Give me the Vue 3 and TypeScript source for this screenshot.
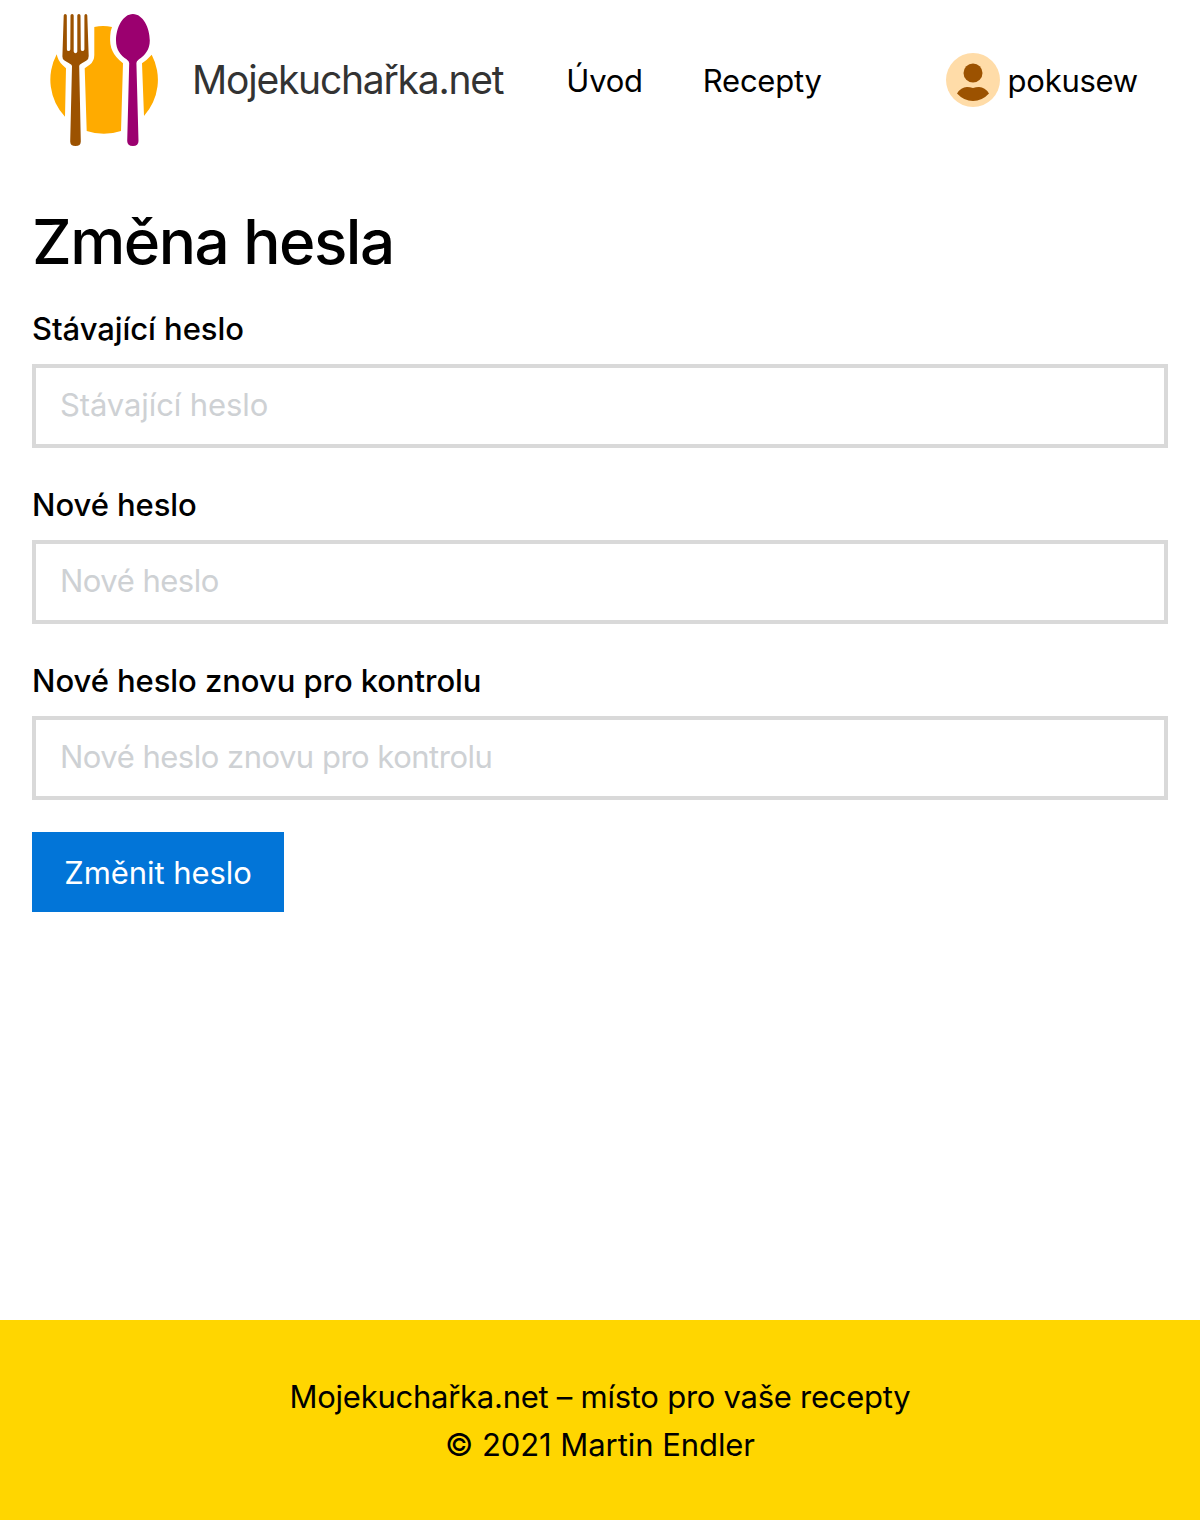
<script setup lang="ts">
interface Field { id: string; label: string }

const links: string[] = ['Úvod', 'Recepty']
const fields: Field[] = [
  { id: 'current', label: 'Stávající heslo' },
  { id: 'next', label: 'Nové heslo' },
  { id: 'repeat', label: 'Nové heslo znovu pro kontrolu' },
]
</script>

<template>
  <div class="page">
    <header class="header">
      <svg class="logo" viewBox="0 0 112 136" aria-hidden="true">
        <g fill="#ffab00">
          <path d="M8.700 42.300Q10 49 14.500 53L18 56.300L17 104.700A54 54 0 0 1 8.700 42.300Z" />
          <path d="M46.300 14.900Q55 13.200 64 14.900Q62.200 19 62.200 24Q61.500 33 64.500 39Q67 45 75 51.300L73 119A54 54 0 0 1 38.700 119L36.700 56.300L42 52.500Q46.300 49 46.300 43Z" />
          <path d="M103.700 42.700A54 54 0 0 1 96 104L94 51.300Q99 48 103.700 42.700Z" />
        </g>
        <path d="M15.700 3.500Q15.700 2 17.200 2T18.800 3.500L18.900 37.500Q19 39 20.500 39T22.300 37.500L22.500 3.500Q22.500 2 24.100 2T25.700 3.500V39.500Q26 41.300 27.500 41.300T29.300 39.500V3.500Q29.300 2 30.900 2T32.500 3.500L32.800 37.500Q33 39 34.500 39T36.400 37.500V3.500Q36.500 2 37.900 2T39.300 3.500L40.700 44Q40.700 47.500 38.500 48.500L33.500 51.500Q31.100 52.800 31.200 54L32.800 129.500Q32.800 134 27.500 134T22.200 129.500L24 54Q24 52.800 21.500 51.500L16.500 48.500Q14.300 47.200 14.400 44.500Z" fill="#9c5200" />
        <path d="M84.900 2C95 2 101.800 16 101.800 28.500C101.800 38 97 43 91 47.300Q88.300 49.200 88.400 51L90.500 129Q90.500 134 84.900 134T79.200 129L81.200 51Q81.300 49.200 78.500 47.300C72.500 43 68 38 68 28.500C68 16 74.800 2 84.900 2Z" fill="#9b006f" />
      </svg>
      <a class="brand">Mojekuchařka.net</a>
      <nav class="nav"><a v-for="link in links" :key="link">{{ link }}</a></nav>
      <div class="user">
        <svg class="avatar" viewBox="0 0 54 54" aria-hidden="true">
          <circle cx="27" cy="27" r="27" fill="#ffdca8" />
          <circle cx="27" cy="20" r="9.500" fill="#9c5200" />
          <path d="M11 40.500Q15 34 21 34Q24 34 27 34.900Q30 34 33 34Q39 34 43 40.500Q36 48 27 48T11 40.500Z" fill="#9c5200" />
        </svg>
        <span>pokusew</span>
      </div>
    </header>
    <main class="main">
      <h1>Změna hesla</h1>
      <form @submit.prevent>
        <div v-for="field in fields" :key="field.id" class="field">
          <label :for="field.id">{{ field.label }}</label>
          <input :id="field.id" type="text" :placeholder="field.label" />
        </div>
        <button type="submit">Změnit heslo</button>
      </form>
    </main>
    <footer class="footer">
      <p>Mojekuchařka.net – místo pro vaše recepty</p>
      <p class="copyright">© 2021 Martin Endler</p>
    </footer>
  </div>
</template>

<style>
body { margin: 0; background: #fff; }
</style>
<style scoped>
.page { min-height: 1520px; display: flex; flex-direction: column; font: 31px/48px Inter, sans-serif; color: #000; }
.page * { box-sizing: border-box; }
.header { height: 160px; display: flex; align-items: center; padding: 0 62px 0 48px; }
.logo { width: 112px; height: 136px; }
.brand { font-size: 39px; color: #333; margin-left: 32px; letter-spacing: -1.22px; }
.nav { display: flex; gap: 60px; margin-left: 63px; padding-top: 2px; letter-spacing: -0.25px; }
.user { display: flex; align-items: center; gap: 8px; margin-left: auto; letter-spacing: -0.25px; }
.user span { padding-top: 2px; }
.avatar { width: 54px; height: 54px; }
.main { flex: 1; padding: 43px 32px 0; }
h1 { font-size: 62px; line-height: 77px; font-weight: 500; margin: 0 0 24px; letter-spacing: -1.5px; }
.field { display: flex; flex-direction: column; margin-bottom: 32px; }
label { font-weight: 500; height: 48px; padding-top: 1px; margin-bottom: 12px; letter-spacing: -0.06px; }
input { height: 84px; border: 4px solid #d9d9d9; padding: 0 24px 3px; font: inherit; border-radius: 0; background: #fff; letter-spacing: -0.5px; }
.field:first-child input { letter-spacing: -0.1px; }
input::placeholder { color: #ced1d4; }
button { display: block; height: 80px; width: 252px; padding: 2px 0 0; border: 0; font: inherit; color: #fff; background: #0275d8; letter-spacing: -0.08px; }
.footer { height: 200px; background: #ffd600; text-align: center; padding-top: 53px; letter-spacing: -0.26px; }
.footer p { margin: 0; }
.footer .copyright { letter-spacing: -0.06px; }
</style>
